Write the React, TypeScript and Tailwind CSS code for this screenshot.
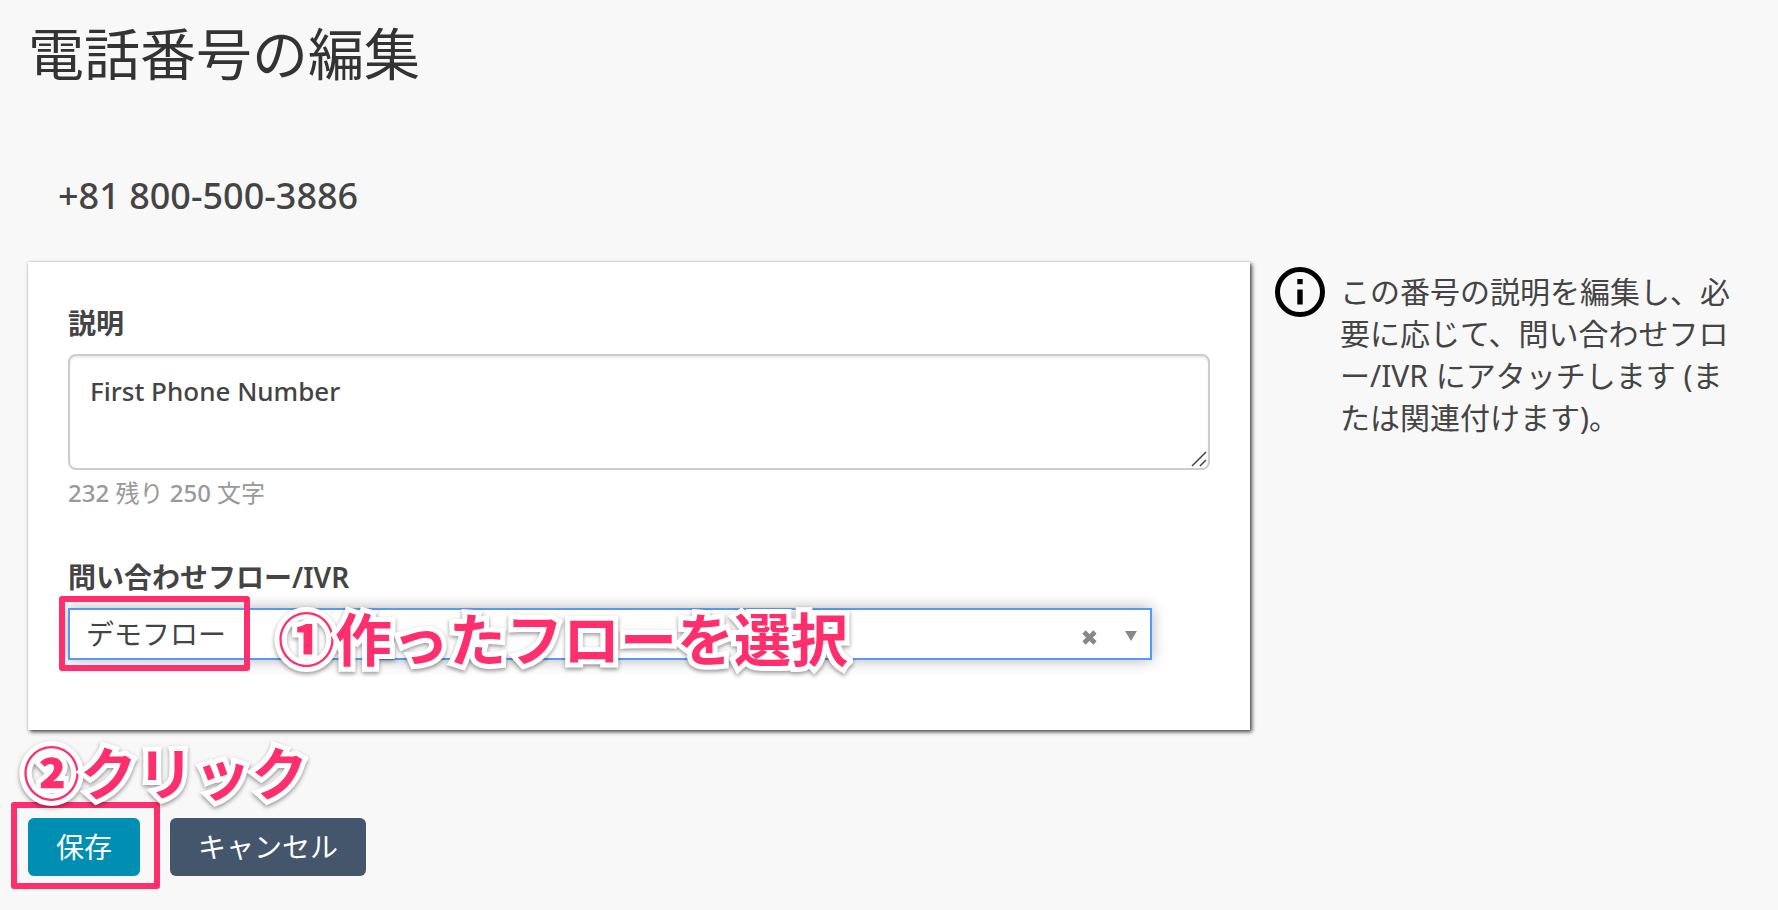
import { useState } from "react";
import type { ReactNode } from "react";

const MAX_LENGTH = 250;

/** Pink call-out text with a white outline */
function Note({ className, children }: { className: string; children: ReactNode }) {
  return (
    <span
      className={`pointer-events-none absolute z-20 whitespace-nowrap text-[57px] leading-[57px] font-bold text-[#ff2f6d] [paint-order:stroke_fill] [-webkit-text-stroke:10px_white] [filter:drop-shadow(0_2px_2px_rgba(0,0,0,0.4))] ${className}`}
    >
      {children}
    </span>
  );
}

/** Pink frame around the control to use */
function Frame({ className }: { className: string }) {
  return (
    <span
      className={`pointer-events-none absolute z-10 rounded-[3px] border-[6px] border-[#ff2f6d] ${className}`}
    />
  );
}

function InfoIcon() {
  return (
    <svg className="mt-[5px] h-[50px] w-[50px] shrink-0" viewBox="0 0 50 50" aria-hidden="true">
      <circle cx="25" cy="25" r="22.5" fill="none" stroke="#000" strokeWidth="5" />
      <rect x="22.3" y="12" width="5.4" height="5.2" fill="#000" />
      <rect x="22.3" y="22.5" width="5.4" height="15" fill="#000" />
    </svg>
  );
}

export default function App() {
  const [description, setDescription] = useState("First Phone Number");
  const [flow, setFlow] = useState("demo");

  return (
    <main className="min-h-screen bg-[#f8f8f8] pt-[21px] pr-[38px] pb-8 pl-7 font-['Noto_Sans','Noto_Sans_CJK_JP',sans-serif] text-[28px] leading-10 text-[#444]">
      <h1 className="text-[56px] leading-16 text-[#333]">電話番号の編集</h1>
      <p className="mt-[87px] ml-[30px] text-4xl leading-12 font-medium">+81 800-500-3886</p>

      <div className="mt-[42px] flex items-start gap-[25px]">
        <section className="min-w-0 flex-1 bg-white px-10 pt-[41px] pb-[70px] shadow-[0_0_2px_rgba(0,0,0,0.2),2px_2px_4px_rgba(0,0,0,0.7)]">
          <label htmlFor="description" className="block font-bold">
            説明
          </label>
          <div className="relative mt-[11px]">
            <textarea
              id="description"
              maxLength={MAX_LENGTH}
              value={description}
              onChange={(e) => setDescription(e.target.value)}
              className="block h-[116px] w-full resize-none rounded-lg border-2 border-[#ccc] bg-white px-5 py-[15px] text-[26px] font-medium shadow-[inset_0_2px_2px_rgba(0,0,0,0.08)] outline-none"
            />
            <svg
              className="pointer-events-none absolute right-[3px] bottom-[3px] h-4 w-4"
              viewBox="0 0 16 16"
              stroke="#444"
              strokeWidth="1.5"
              aria-hidden="true"
            >
              <path d="M1 15L15 1M9 15L15 9" />
            </svg>
          </div>
          <p className="mt-[7px] text-2xl leading-8 text-[#999]">
            <span className="font-medium">{MAX_LENGTH - description.length}</span> 残り{" "}
            <span className="font-medium">{MAX_LENGTH}</span> 文字
          </p>

          <label htmlFor="flow" className="mt-12 block font-bold">
            問い合わせフロー<span className="font-semibold">/IVR</span>
          </label>
          <div className="relative mt-[11px] mr-[58px]">
            <select
              id="flow"
              value={flow}
              onChange={(e) => setFlow(e.target.value)}
              className="block h-[52px] w-full appearance-none border-2 border-[#5897fb] bg-white px-4 shadow-[0_0_14px_rgba(0,0,0,0.3)] outline-none"
            >
              <option value="" />
              <option value="demo">デモフロー</option>
            </select>
            <button
              type="button"
              aria-label="クリア"
              onClick={() => setFlow("")}
              className="absolute top-[22px] right-[55px] h-[15px] w-[15px]"
            >
              <svg viewBox="0 0 15 15" stroke="#888" strokeWidth="4.6" aria-hidden="true">
                <path d="M2 2L13 13M13 2L2 13" />
              </svg>
            </button>
            <svg
              className="pointer-events-none absolute top-[23px] right-[15px] h-[10px] w-3"
              viewBox="0 0 12 10"
              fill="#888"
              aria-hidden="true"
            >
              <path d="M0 0H12L6 10Z" />
            </svg>
            <Frame className="-top-3 -left-[9px] h-[75px] w-[191px]" />
            <Note className="top-[3px] left-[210px]">
              <span className="font-black">①</span>作ったフローを選択
            </Note>
          </div>
        </section>

        <aside className="flex w-[465px] shrink-0 gap-[15px]">
          <InfoIcon />
          <p className="mt-[9px] text-[30px] leading-[42px]">
            この番号の説明を編集し、必要に応じて、問い合わせフロー/IVR にアタッチします
            (または関連付けます)。
          </p>
        </aside>
      </div>

      <div className="relative mt-[88px] flex gap-[30px] text-white [text-shadow:0_2px_2px_rgba(0,0,0,0.4)]">
        <button type="button" className="h-[58px] rounded-md bg-[#008fb3] px-7">
          保存
        </button>
        <button type="button" className="h-[58px] rounded-md bg-[#44566c] px-7">
          キャンセル
        </button>
        <Frame className="-top-4 -left-[17px] h-[87px] w-[149px]" />
        <Note className="-top-[73px] -left-[5px] [text-shadow:none]">
          <span className="font-black">②</span>クリック
        </Note>
      </div>
    </main>
  );
}
